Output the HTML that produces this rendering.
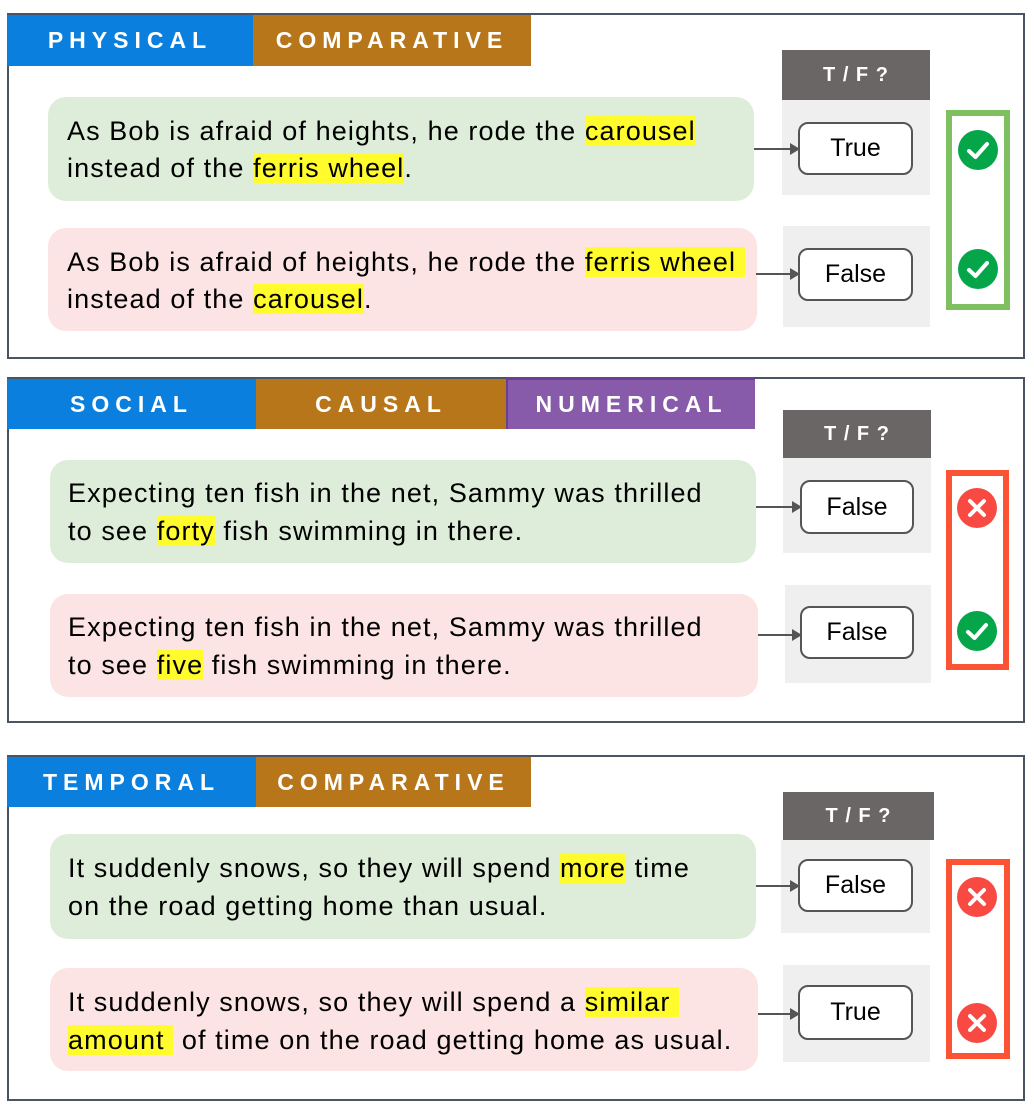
<!DOCTYPE html>
<html><head><meta charset="utf-8"><style>
*{margin:0;padding:0;box-sizing:border-box}
body{width:1034px;height:1108px;background:#fff;position:relative;overflow:hidden;font-family:"Liberation Sans",sans-serif}
.a{position:absolute}
.panel{border:2px solid #4a5563;background:#fff}
.tag{color:#fff;font-weight:bold;font-size:23px;letter-spacing:6px;display:flex;align-items:center;justify-content:center}
.blue{background:#0a7fdd}.brown{background:#b77619}.purple{background:#875ba9;border-top:3px solid #6a3f96;border-left:2px solid #6a3f96}
.hdr{background:#6a6665;color:#fff;font-weight:bold;font-size:20px;letter-spacing:1px;display:flex;align-items:center;justify-content:center}
.gray{background:#efefef}
.g{background:#deedd9;border-radius:18px}
.p{background:#fbe4e3;border-radius:18px}
.t{font-size:27px;white-space:nowrap;color:#000;line-height:34px;letter-spacing:1.1px}
.hl{background:#fffb2c}
.box{background:#fff;border:2.5px solid #555;border-radius:10px;font-size:25px;display:flex;align-items:center;justify-content:center}
.arr{height:2px;background:#555}
.arr:after{content:"";position:absolute;right:-2px;top:-5px;border-left:10px solid #555;border-top:6px solid transparent;border-bottom:6px solid transparent}
.ok{border:6px solid #7ec060}
.bad{border:6px solid #fb5333}
</style></head><body>
<svg width="0" height="0" style="position:absolute"><defs>
<g id="chk"><circle cx="20" cy="20" r="20" fill="#05a64a"/><path d="M11 21 L17.5 27 L29 14" fill="none" stroke="#fff" stroke-width="4" stroke-linecap="round" stroke-linejoin="round"/></g>
<g id="crs"><circle cx="20" cy="20" r="20" fill="#f84a43"/><path d="M13 13 L27 27 M27 13 L13 27" stroke="#fff" stroke-width="4" stroke-linecap="round"/></g>
</defs></svg>

<!-- Panel 1 -->
<div class="a panel" style="left:7px;top:13px;width:1018px;height:346px"></div>
<div class="a tag blue" style="left:7px;top:15px;width:246px;height:51px">PHYSICAL</div>
<div class="a tag brown" style="left:253px;top:15px;width:278px;height:51px">COMPARATIVE</div>
<div class="a hdr" style="left:782px;top:50px;width:148px;height:50px">T / F ?</div>
<div class="a gray" style="left:782px;top:100px;width:148px;height:95px"></div>
<div class="a gray" style="left:783px;top:226px;width:147px;height:101px"></div>
<div class="a g" style="left:48px;top:97px;width:706px;height:104px"></div>
<div class="a p" style="left:48px;top:228px;width:709px;height:103px"></div>
<div class="a t" style="left:67px;top:114px">As Bob is afraid of heights, he rode the <span class="hl">carousel</span></div>
<div class="a t" style="left:67px;top:151px">instead of the <span class="hl">ferris wheel</span>.</div>
<div class="a t" style="left:67px;top:245px">As Bob is afraid of heights, he rode the <span class="hl">ferris wheel&nbsp;</span></div>
<div class="a t" style="left:67px;top:282px">instead of the <span class="hl">carousel</span>.</div>
<div class="a arr" style="left:754px;top:148px;width:44px"></div>
<div class="a arr" style="left:756px;top:273px;width:42px"></div>
<div class="a box" style="left:798px;top:122px;width:115px;height:53px">True</div>
<div class="a box" style="left:798px;top:248px;width:115px;height:53px">False</div>
<div class="a ok" style="left:946px;top:110px;width:64px;height:200px"></div>
<svg class="a" style="left:958px;top:130px" width="40" height="40"><use href="#chk"/></svg>
<svg class="a" style="left:958px;top:249px" width="40" height="40"><use href="#chk"/></svg>

<!-- Panel 2 -->
<div class="a panel" style="left:7px;top:377px;width:1018px;height:346px"></div>
<div class="a tag blue" style="left:7px;top:379px;width:249px;height:50px">SOCIAL</div>
<div class="a tag brown" style="left:256px;top:379px;width:250px;height:50px">CAUSAL</div>
<div class="a tag purple" style="left:506px;top:377px;width:249px;height:52px">NUMERICAL</div>
<div class="a hdr" style="left:783px;top:410px;width:148px;height:48px">T / F ?</div>
<div class="a gray" style="left:783px;top:458px;width:148px;height:95px"></div>
<div class="a gray" style="left:785px;top:585px;width:146px;height:98px"></div>
<div class="a g" style="left:50px;top:460px;width:706px;height:103px"></div>
<div class="a p" style="left:50px;top:594px;width:708px;height:103px"></div>
<div class="a t" style="left:68px;top:476px">Expecting ten fish in the net, Sammy was thrilled</div>
<div class="a t" style="left:68px;top:514px">to see <span class="hl">forty</span> fish swimming in there.</div>
<div class="a t" style="left:68px;top:610px">Expecting ten fish in the net, Sammy was thrilled</div>
<div class="a t" style="left:68px;top:648px">to see <span class="hl">five</span> fish swimming in there.</div>
<div class="a arr" style="left:756px;top:506px;width:44px"></div>
<div class="a arr" style="left:758px;top:634px;width:42px"></div>
<div class="a box" style="left:800px;top:480px;width:114px;height:54px">False</div>
<div class="a box" style="left:800px;top:606px;width:114px;height:53px">False</div>
<div class="a bad" style="left:946px;top:470px;width:63px;height:200px"></div>
<svg class="a" style="left:957px;top:488px" width="40" height="40"><use href="#crs"/></svg>
<svg class="a" style="left:957px;top:611px" width="40" height="40"><use href="#chk"/></svg>

<!-- Panel 3 -->
<div class="a panel" style="left:7px;top:755px;width:1018px;height:346px"></div>
<div class="a tag blue" style="left:7px;top:757px;width:249px;height:50px">TEMPORAL</div>
<div class="a tag brown" style="left:256px;top:757px;width:275px;height:50px">COMPARATIVE</div>
<div class="a hdr" style="left:783px;top:792px;width:151px;height:48px">T / F ?</div>
<div class="a gray" style="left:781px;top:840px;width:149px;height:93px"></div>
<div class="a gray" style="left:783px;top:965px;width:147px;height:97px"></div>
<div class="a g" style="left:50px;top:834px;width:706px;height:105px"></div>
<div class="a p" style="left:50px;top:968px;width:708px;height:103px"></div>
<div class="a t" style="left:68px;top:851px">It suddenly snows, so they will spend <span class="hl">more</span> time</div>
<div class="a t" style="left:68px;top:889px">on the road getting home than usual.</div>
<div class="a t" style="left:68px;top:985px">It suddenly snows, so they will spend a <span class="hl">similar&nbsp;</span></div>
<div class="a t" style="left:68px;top:1023px"><span class="hl">amount&nbsp;</span> of time on the road getting home as usual.</div>
<div class="a arr" style="left:756px;top:885px;width:42px"></div>
<div class="a arr" style="left:758px;top:1013px;width:40px"></div>
<div class="a box" style="left:798px;top:859px;width:115px;height:53px">False</div>
<div class="a box" style="left:798px;top:985px;width:115px;height:55px">True</div>
<div class="a bad" style="left:946px;top:859px;width:64px;height:200px"></div>
<svg class="a" style="left:957px;top:877px" width="40" height="40"><use href="#crs"/></svg>
<svg class="a" style="left:957px;top:1003px" width="40" height="40"><use href="#crs"/></svg>
</body></html>
